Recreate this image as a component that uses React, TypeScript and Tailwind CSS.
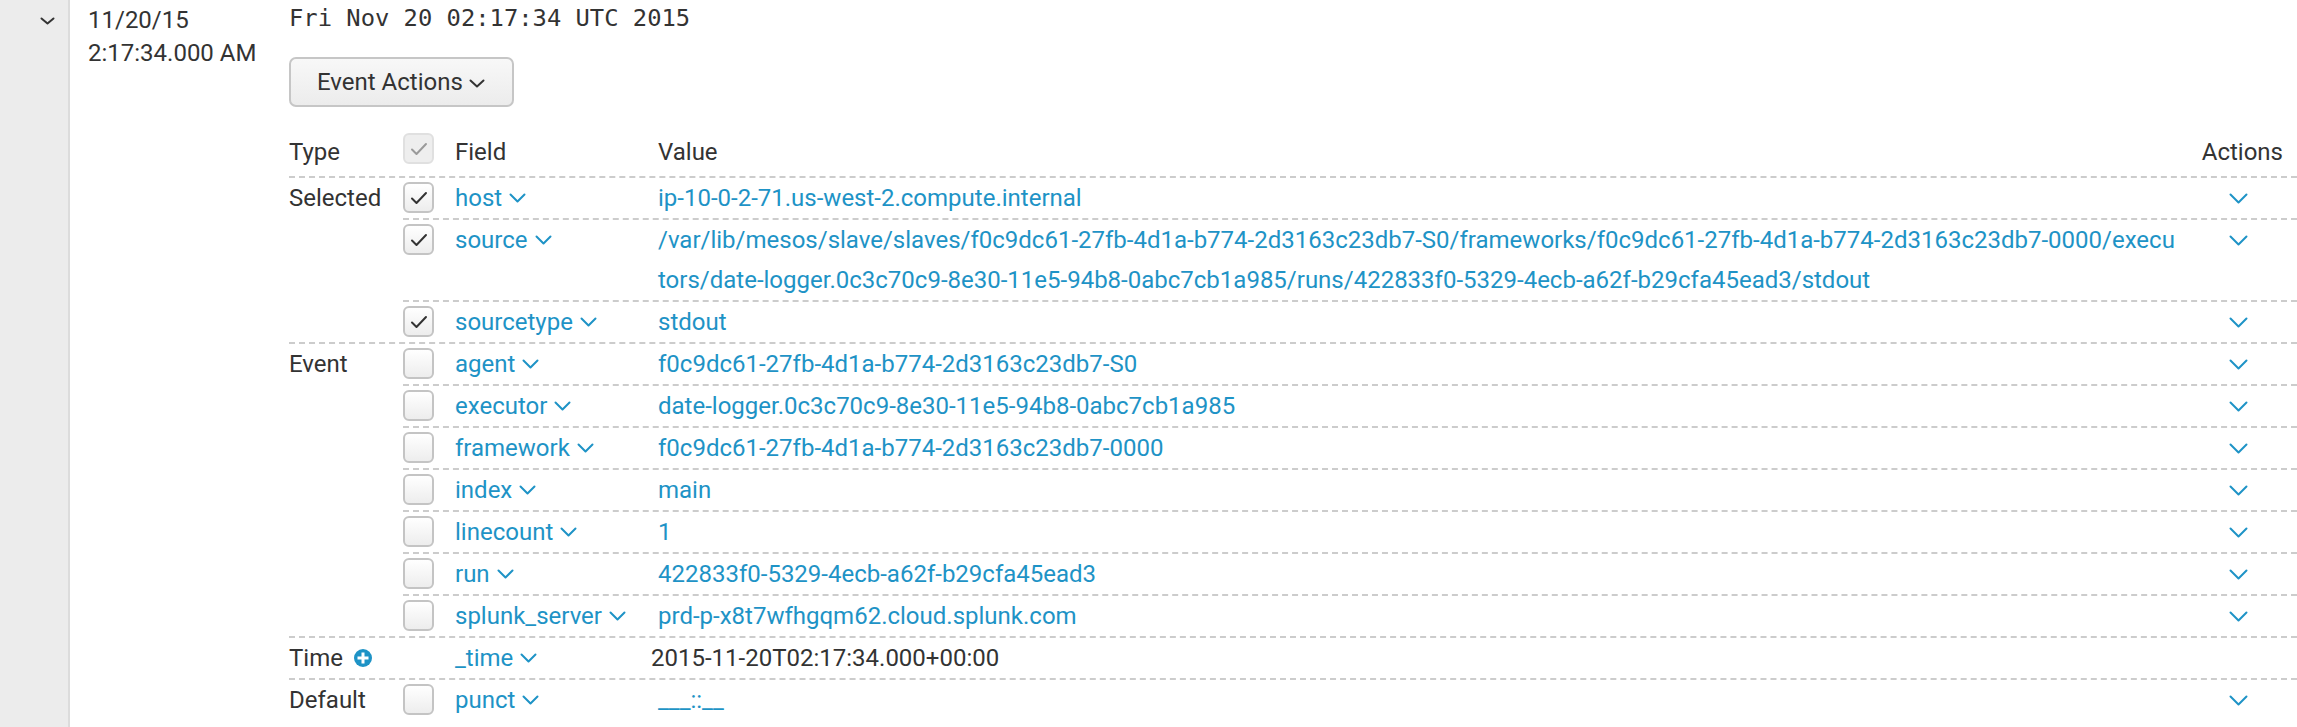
import React from 'react';

type FieldRow = {
  name: string;
  value: string[];
  checked?: boolean;
  noCheckbox?: boolean;
  plain?: boolean;
  noAction?: boolean;
};

type Group = {
  label: string;
  addIcon?: boolean;
  rows: FieldRow[];
};

const groups: Group[] = [
  {
    label: 'Selected',
    rows: [
      { name: 'host', value: ['ip-10-0-2-71.us-west-2.compute.internal'], checked: true },
      {
        name: 'source',
        value: [
          '/var/lib/mesos/slave/slaves/f0c9dc61-27fb-4d1a-b774-2d3163c23db7-S0/frameworks/f0c9dc61-27fb-4d1a-b774-2d3163c23db7-0000/execu',
          'tors/date-logger.0c3c70c9-8e30-11e5-94b8-0abc7cb1a985/runs/422833f0-5329-4ecb-a62f-b29cfa45ead3/stdout',
        ],
        checked: true,
      },
      { name: 'sourcetype', value: ['stdout'], checked: true },
    ],
  },
  {
    label: 'Event',
    rows: [
      { name: 'agent', value: ['f0c9dc61-27fb-4d1a-b774-2d3163c23db7-S0'] },
      { name: 'executor', value: ['date-logger.0c3c70c9-8e30-11e5-94b8-0abc7cb1a985'] },
      { name: 'framework', value: ['f0c9dc61-27fb-4d1a-b774-2d3163c23db7-0000'] },
      { name: 'index', value: ['main'] },
      { name: 'linecount', value: ['1'] },
      { name: 'run', value: ['422833f0-5329-4ecb-a62f-b29cfa45ead3'] },
      { name: 'splunk_server', value: ['prd-p-x8t7wfhgqm62.cloud.splunk.com'] },
    ],
  },
  {
    label: 'Time',
    addIcon: true,
    rows: [
      { name: '_time', value: ['2015-11-20T02:17:34.000+00:00'], noCheckbox: true, plain: true, noAction: true },
    ],
  },
  {
    label: 'Default',
    rows: [{ name: 'punct', value: ['___::__'] }],
  },
];

const Chevron: React.FC<{ className?: string; w?: number; h?: number }> = ({ className, w = 17, h = 10 }) => (
  <svg width={w} height={h} viewBox={`0 0 ${w} ${h}`} className={className} fill="none">
    <polyline
      points={`1.5,1.5 ${w / 2},${h - 1.5} ${w - 1.5},1.5`}
      stroke="currentColor"
      strokeWidth="2"
      strokeLinecap="round"
      strokeLinejoin="round"
    />
  </svg>
);

const Checkbox: React.FC<{ checked?: boolean; header?: boolean }> = ({ checked, header }) => (
  <div
    className={
      header
        ? 'w-[31px] h-[31px] rounded-[6px] border-2 border-[#e0e0e0] bg-[#eeeeee] flex items-center justify-center'
        : 'w-[31px] h-[31px] rounded-[6px] border-2 border-[#c4c4c4] bg-gradient-to-b from-white to-[#ededed] flex items-center justify-center'
    }
  >
    {checked && (
      <svg width="18" height="14" viewBox="0 0 18 14" fill="none">
        <polyline
          points="2,7.5 6.5,12 16,2"
          stroke={header ? '#9a9a9a' : '#333333'}
          strokeWidth="2"
          strokeLinecap="round"
          strokeLinejoin="round"
        />
      </svg>
    )}
  </div>
);

const PlusCircle = () => (
  <svg width="18" height="18" viewBox="0 0 18 18" className="ml-[11px]">
    <circle cx="9" cy="9" r="9" fill="#1e93c6" />
    <rect x="7.5" y="3.5" width="3" height="11" fill="white" />
    <rect x="3.5" y="7.5" width="11" height="3" fill="white" />
  </svg>
);

export default function App() {
  return (
    <div className="h-[727px] w-full overflow-hidden bg-white flex font-[Roboto,sans-serif] text-[24px] text-[#333333]">
      {/* expand toggle column */}
      <div className="w-[70px] shrink-0 bg-[#ececec] border-r-2 border-[#dcdcdc] pl-[40px] pt-[17px]">
        <Chevron w={15} h={8} className="text-[#333333]" />
      </div>

      {/* event time */}
      <div className="w-[219px] shrink-0 pl-[18px] pt-[4px] leading-[33px]">
        <div>11/20/15</div>
        <div>2:17:34.000 AM</div>
      </div>

      {/* event body */}
      <div className="flex-1 min-w-0">
        <div className="font-['DejaVu_Sans_Mono',monospace] text-[23.8px] leading-[36px] text-[#333333]">
          Fri Nov 20 02:17:34 UTC 2015
        </div>

        <button className="mt-[21px] h-[50px] pl-[26px] pr-[27px] flex items-center gap-[6px] rounded-[7px] border-2 border-[#c6c6c6] bg-gradient-to-b from-[#f8f8f8] to-[#ececec] text-[#333333]">
          <span>Event Actions</span>
          <Chevron w={16} h={9} className="text-[#333333] mt-[2px]" />
        </button>

        <div className="mt-[25px]">
          {/* header */}
          <div className="flex leading-[40px] pb-[4px]">
            <div className="w-[114px] shrink-0">Type</div>
            <div className="w-[52px] shrink-0 pt-[1px]">
              <Checkbox checked header />
            </div>
            <div className="w-[203px] shrink-0">Field</div>
            <div className="flex-1 min-w-0">Value</div>
            <div className="w-[107px] shrink-0 text-right pr-[14px]">Actions</div>
          </div>

          {groups.map((g) => (
            <div key={g.label} className="flex border-t-2 border-dashed border-[#cccccc]">
              <div className="w-[114px] shrink-0 leading-[40px] flex items-center h-[40px]">
                <span>{g.label}</span>
                {g.addIcon && <PlusCircle />}
              </div>
              <div className="flex-1 min-w-0">
                {g.rows.map((r, i) => (
                  <div
                    key={r.name}
                    className={`flex leading-[40px] ${i > 0 ? 'border-t-2 border-dashed border-[#cccccc]' : ''}`}
                  >
                    <div className="w-[52px] shrink-0 pt-[4px]">
                      {!r.noCheckbox && <Checkbox checked={r.checked} />}
                    </div>
                    <div className="w-[203px] shrink-0 text-[#1e93c6] whitespace-nowrap">
                      {r.name}
                      <Chevron className="inline-block ml-[7px] mb-[3px]" />
                    </div>
                    <div
                      className={`flex-1 min-w-0 whitespace-nowrap ${r.plain ? 'text-[#333333] -ml-[7px]' : 'text-[#1e93c6]'}`}
                    >
                      {r.value.map((line) => (
                        <div key={line}>{line}</div>
                      ))}
                    </div>
                    <div className="w-[107px] shrink-0 pl-[39px] pt-[15px]">
                      {!r.noAction && <Chevron w={19} h={11} className="text-[#1e93c6]" />}
                    </div>
                  </div>
                ))}
              </div>
            </div>
          ))}
        </div>
      </div>
    </div>
  );
}
